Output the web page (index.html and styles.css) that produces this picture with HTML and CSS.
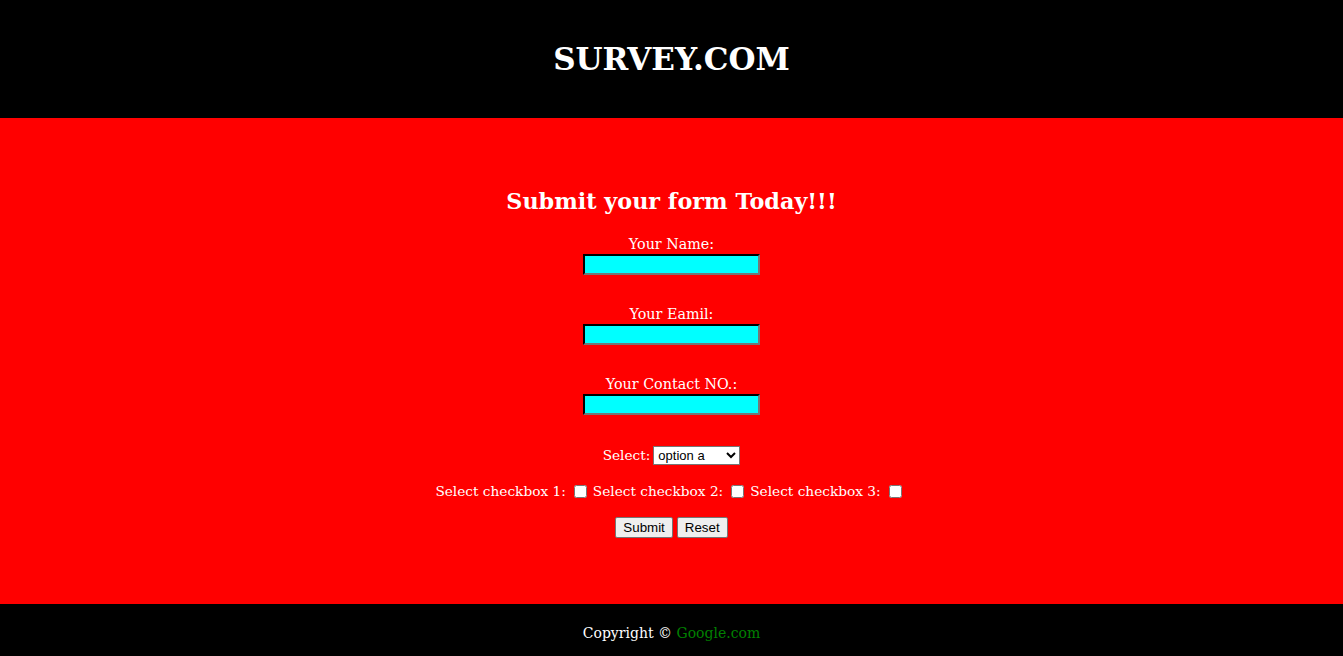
FILE: index.html
```html
<!DOCTYPE html>
<html>
<head>
<meta charset="utf-8">
<title>Survey</title>
<link rel="stylesheet" href="styles.css">
</head>
<body>
<header class="site-header">
  <h1 class="brand">SURVEY.COM</h1>
</header>
<main class="hero">
  <h2 class="hero-title">Submit your form Today!!!</h2>
  <form class="survey-form">
    <div class="field">
      <label class="field-label" for="name">Your Name:</label>
      <input class="text-input" type="text" id="name">
    </div>
    <div class="field">
      <label class="field-label" for="email">Your Eamil:</label>
      <input class="text-input" type="text" id="email">
    </div>
    <div class="field">
      <label class="field-label" for="contact">Your Contact NO.:</label>
      <input class="text-input" type="text" id="contact">
    </div>
    <div class="row row-select">
      <label class="inline-label" for="sel">Select:</label>
      <select class="select" id="sel">
        <option>option a</option>
        <option>option b</option>
        <option>option c</option>
      </select>
    </div>
    <div class="row row-checks">
      <label class="inline-label" for="c1">Select checkbox 1:</label>
      <input class="check" type="checkbox" id="c1">
      <label class="inline-label" for="c2">Select checkbox 2:</label>
      <input class="check" type="checkbox" id="c2">
      <label class="inline-label" for="c3">Select checkbox 3:</label>
      <input class="check" type="checkbox" id="c3">
    </div>
    <div class="row row-buttons">
      <button class="btn" type="submit">Submit</button>
      <button class="btn" type="reset">Reset</button>
    </div>
  </form>
</main>
<footer class="site-footer">
  <p class="copy">Copyright © <span class="copy-link">Google.com</span></p>
</footer>
</body>
</html>
```
FILE: styles.css
```css
html, body {
  margin: 0;
  padding: 0;
}
body {
  font-family: Georgia, "DejaVu Serif", serif;
  color: #fff;
  background: #000;
}
.site-header {
  height: 118px;
  background: #000;
  display: flex;
  align-items: center;
  justify-content: center;
}
.brand {
  margin: 0;
  font-size: 31px;
  font-weight: bold;
  line-height: 36px;
}
.hero {
  height: 486px;
  box-sizing: border-box;
  background: #ff0000;
  padding-top: 69px;
  display: flex;
  flex-direction: column;
  align-items: center;
}
.hero-title {
  margin: 0;
  font-size: 22.3px;
  line-height: 28px;
  font-weight: bold;
}
.survey-form {
  display: flex;
  flex-direction: column;
  align-items: center;
  margin-top: 20px;
  font-size: 15px;
}
.field {
  display: flex;
  flex-direction: column;
  align-items: center;
  margin-bottom: 30px;
}
.field-label {
  line-height: 19px;
  font-size: 14.3px;
}
.text-input {
  width: 177px;
  height: 21px;
  box-sizing: border-box;
  margin: 0;
  padding: 1px 2px;
  background: #00ffff;
  border-width: 2px;
  border-style: solid;
  border-color: #000 #767676 #767676 #000;
}
.row {
  display: flex;
  align-items: center;
  justify-content: center;
  height: 20px;
}
.row-checks {
  margin-top: 16px;
}
.row-buttons {
  margin-top: 16px;
}
.inline-label {
  line-height: 19px;
  font-size: 13.7px;
}
.select {
  margin-left: 3px;
  width: 87px;
  height: 19px;
  font-family: Arial, "Liberation Sans", sans-serif;
  font-size: 13px;
  padding: 0;
  background: #fff;
  color: #000;
  border: 1px solid #767676;
  border-radius: 0;
}
.check {
  width: 13px;
  height: 13px;
  margin: 0 6px 0 8px;
}
.btn {
  font-family: Arial, "Liberation Sans", sans-serif;
  font-size: 13.33px;
  height: 21px;
  padding: 0 7px;
  margin: 0 2px;
  color: #000;
  background: #efefef;
  border: 1px solid #767676;
  border-radius: 2px;
}
.site-footer {
  height: 52px;
  box-sizing: border-box;
  background: #000;
  display: flex;
  align-items: center;
  justify-content: center;
  padding-top: 6px;
}
.copy {
  margin: 0;
  font-size: 14px;
  line-height: 18px;
}
.copy-link {
  color: #008000;
}
```
